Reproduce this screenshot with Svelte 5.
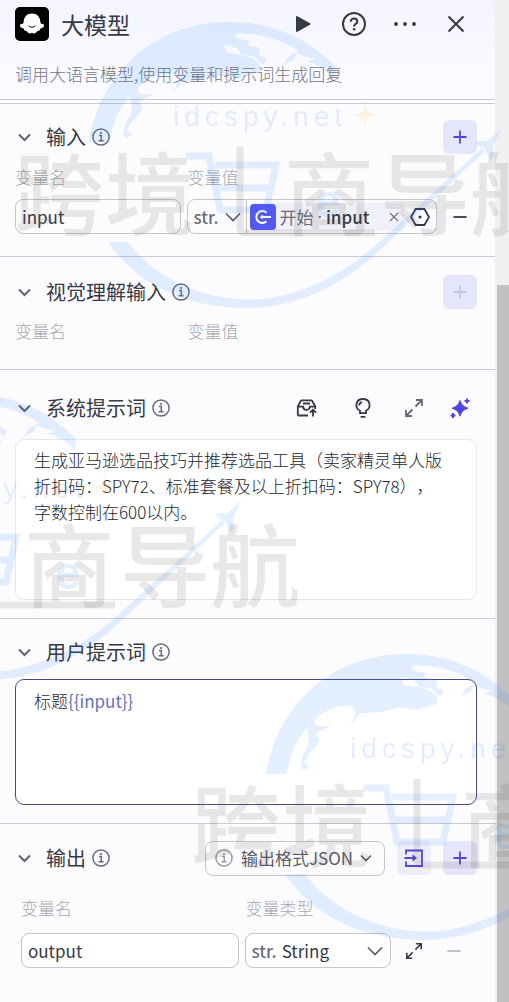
<script>
  let name = $state('input');
  let outputName = $state('output');
  let systemPrompt = $state(
    '生成亚马逊选品技巧并推荐选品工具（卖家精灵单人版\n折扣码：SPY72、标准套餐及以上折扣码：SPY78），\n字数控制在600以内。'
  );
  const variable = '{{input}}';
  const marks = [
    [0, 0],
    [-260, 372],
    [177, 632]
  ];
</script>

{#snippet info()}
  <svg class="info" viewBox="0 0 18 18" width="18" height="18" aria-hidden="true">
    <circle cx="9" cy="9" r="8.1" />
    <path d="M7 7.6h2.3v5M6.6 12.8h5" />
    <circle class="dot" cx="9" cy="5" r="1.1" />
  </svg>
{/snippet}

{#snippet plus()}
  <svg viewBox="0 0 34 34" width="34" height="34" aria-hidden="true"><path d="M17 10.5v13M10.5 17h13" /></svg>
{/snippet}

{#snippet minus()}
  <svg viewBox="0 0 34 34" width="34" height="34" aria-hidden="true"><path d="M10.5 17h13" /></svg>
{/snippet}

{#snippet title(text)}
  <h2>
    <button class="toggle" type="button">
      <svg viewBox="0 0 18 18" width="18" height="18" aria-hidden="true"><path d="M4 6.5l5.5 5.5L15 6.5" /></svg>
      <span>{text}</span>
    </button>
    {@render info()}
  </h2>
{/snippet}

<div class="page">
  <main>
    <header>
      <div class="bar">
        <svg class="logo" viewBox="0 0 34 34" width="34" height="34" aria-hidden="true">
          <rect width="34" height="34" rx="5" />
          <path class="ghost" d="M17 6.500c5 0 8 3.400 8.400 8.600.2 1.700.900 1.900 2.100 1.800 1.800 0 2 2.100.7 3.400-.8.8-1.800 1.200-2.900 1.300-.2 1.900-1.400 2.700-3 2.400-1.100 2.500-3.400 2.900-5.300 1.800-1.900 1.100-4.200.7-5.300-1.800-1.600.3-2.800-.5-3-2.400-1.100-.1-2.100-.5-2.900-1.300-1.300-1.300-1.100-3.400.7-3.400 1.200.1 1.900-.1 2.100-1.800.4-5.200 3.400-8.600 8.400-8.600z" />
          <path class="smile" d="M13.500 18.500c1.500 2.300 5.500 2.300 7 0" />
        </svg>
        <h1>大模型</h1>
        <div class="actions">
          <button type="button" aria-label="运行"><svg viewBox="0 0 34 34" width="34" height="34"><path class="fill" d="M10 10c0-.9.7-1.200 1.400-.8l12.600 7c.8.5.8 1.100 0 1.600l-12.600 7c-.7.4-1.400.1-1.400-.8z" /></svg></button>
          <button type="button" aria-label="帮助"><svg viewBox="0 0 34 34" width="34" height="34"><circle cx="17" cy="17" r="11" /><path d="M13.800 14.700c0-4.300 6.500-4 6.500-.2 0 2.500-3.200 2.300-3.200 5" /><circle class="fill" cx="17.100" cy="22.300" r="1.300" /></svg></button>
          <button type="button" aria-label="更多"><svg viewBox="0 0 34 34" width="34" height="34"><circle class="fill" cx="8" cy="17" r="1.900" /><circle class="fill" cx="17" cy="17" r="1.900" /><circle class="fill" cx="26" cy="17" r="1.900" /></svg></button>
          <button type="button" aria-label="关闭"><svg viewBox="0 0 34 34" width="34" height="34"><path d="M9.500 9.500l15 15M24.500 9.500l-15 15" /></svg></button>
        </div>
      </div>
      <p>调用大语言模型,使用变量和提示词生成回复</p>
    </header>

    <section class="inputs">
      <div class="head">
        {@render title('输入')}
        <button class="square" type="button" aria-label="添加输入">{@render plus()}</button>
      </div>
      <div class="row pair labels"><label for="var-name">变量名</label><label for="var-type">变量值</label></div>
      <div class="row pair">
        <input id="var-name" class="field" bind:value={name} />
        <div class="field combo">
          <span class="picker">
            <select id="var-type"><option>str.</option></select>
            <svg class="down" viewBox="0 0 16 16" width="16" height="16" aria-hidden="true"><path d="M1 4.500l7 7 7-7" /></svg>
          </span>
          <span class="chip">
            <svg class="start" viewBox="0 0 26 26" width="26" height="26" aria-hidden="true"><rect width="26" height="26" rx="4" /><path d="M16.500 8.700a6 6 0 1 0 0 8.600M11.500 13h9.500" /><circle cx="12" cy="13" r="1.700" /></svg>
            <span class="source">开始</span><span class="sep">·</span><b>input</b>
            <button class="clear" type="button" aria-label="清除"><svg viewBox="0 0 12 12" width="12" height="12"><path d="M2 2l8 8M10 2l-8 8" /></svg></button>
          </span>
          <button class="hex" type="button" aria-label="选择变量"><svg viewBox="0 0 20 20" width="20" height="20"><path d="M5.600 2h8.800L19 10l-4.600 8H5.600L1 10z" /><circle class="fill" cx="10" cy="10" r="1.600" /></svg></button>
        </div>
        <button class="plain" type="button" aria-label="删除">{@render minus()}</button>
      </div>
    </section>

    <section class="vision">
      <div class="head">
        {@render title('视觉理解输入')}
        <button class="square" type="button" aria-label="添加视觉输入" disabled>{@render plus()}</button>
      </div>
      <div class="row pair labels"><span>变量名</span><span>变量值</span></div>
    </section>

    <section class="system">
      <div class="head">
        {@render title('系统提示词')}
        <button class="plain wide" type="button" aria-label="提示词库"><svg viewBox="0 0 22 22" width="22" height="22"><path d="M12 18.500H2.800a1 1 0 0 1-1-1V9.500L5 3.800a1 1 0 0 1 .9-.5h9.200a1 1 0 0 1 .9.5l3.300 5.700v2.500M2 9.700h5.200c0 4.200 6.600 4.200 6.600 0h5.300M7 6.500h7M17 19.500v-6.300M14 15.700l3-3 3 3" /></svg></button>
        <button class="plain wide" type="button" aria-label="示例"><svg viewBox="0 0 22 22" width="22" height="22"><path d="M8 16.200v-2.400C2.300 10.800 3.500 2 11 2s8.700 8.800 3 11.800v2.400zM8.600 19.800h4.800M7.200 8.500c.1-1.900 1.200-3.100 2.900-3.400" /></svg></button>
        <button class="plain grey" type="button" aria-label="展开系统提示词"><svg viewBox="0 0 20 20" width="20" height="20"><path d="M11.500 8.500l6-6M12 2h6v6M8.500 11.500l-6 6M2 12v6h6" /></svg></button>
        <button class="plain spark" type="button" aria-label="优化"><svg viewBox="0 0 22 22" width="22" height="22"><path d="M11 3.500c1.800 4.600 2.900 5.700 8 7.700-5.100 2-6.200 3.100-8 8-1.800-4.900-2.900-6-8-8 5.100-2 6.200-3.100 8-7.700z" /><path class="thin" d="M18 1.500v5M15.500 4h5M4 16v5M1.500 18.500h5" /></svg></button>
      </div>
      <textarea aria-label="系统提示词" bind:value={systemPrompt}></textarea>
    </section>

    <section class="user">
      <div class="head">{@render title('用户提示词')}</div>
      <div class="editor" role="textbox" tabindex="0" aria-multiline="true" aria-label="用户提示词" contenteditable="true">标题<span>{variable}</span></div>
    </section>

    <section class="output">
      <div class="head">
        {@render title('输出')}
        <div class="field format">
          {@render info()}
          <label for="format">输出格式</label>
          <select id="format"><option>JSON</option></select>
          <svg class="down" viewBox="0 0 12 12" width="12" height="12" aria-hidden="true"><path d="M1 3.500l5 5 5-5" /></svg>
        </div>
        <button class="square pale" type="button" aria-label="导入"><svg viewBox="0 0 34 34" width="34" height="34"><path d="M9 13.500v-4h16v15.500H9v-4.500M7.500 17h10" /><path class="fill" d="M15.500 13.200l4.500 3.800-4.500 3.800z" /></svg></button>
        <button class="square" type="button" aria-label="添加输出">{@render plus()}</button>
      </div>
      <div class="row out labels"><label for="out-name">变量名</label><label for="out-type">变量类型</label></div>
      <div class="row out">
        <input id="out-name" class="field" bind:value={outputName} />
        <div class="field type">
          <span>str.</span>
          <select id="out-type"><option>String</option></select>
          <svg class="down" viewBox="0 0 16 16" width="16" height="16" aria-hidden="true"><path d="M1 4.500l7 7 7-7" /></svg>
        </div>
        <button class="plain" type="button" aria-label="展开"><svg viewBox="0 0 20 20" width="18" height="18"><path d="M11.500 8.500l6-6M12 2h6v6M8.500 11.500l-6 6M2 12v6h6" /></svg></button>
        <button class="plain" type="button" aria-label="删除输出" disabled>{@render minus()}</button>
      </div>
    </section>
  </main>
  <div class="scroll"><div class="thumb"></div></div>

  <svg class="marks" aria-hidden="true">
    {#each marks as [x, y]}
      <g transform="translate({x} {y})">
        <g class="blue" transform="translate(77 -12) scale(0.3333)">
          <path d="M35 462C75 235 250 100 460 102 590 104 690 150 775 235V270C755 250 735 240 715 228L690 222 715 212 680 205 660 195 650 215 620 230 635 205 665 190C610 150 540 132 470 137L480 152 520 160 510 170 550 180 545 200 570 210 560 230 530 205 495 200 480 180 440 170 450 195 490 200 525 210 545 225 553 250 515 262 485 270 440 262 385 275 320 280 290 312 305 275 290 258C250 252 200 275 180 305L190 318 230 318 185 340 196 360 190 375 165 400 150 425 166 440 150 450 138 440 145 410 165 370 160 325C125 360 110 400 98 462z" />
        </g>
        <path class="blue" d="M108 242h20C160 285 215 303 265 299 315 291 350 268 378 243L482 148 485 151 380 250C340 288 292 309 242 308 180 306 135 282 108 242z" />
        <path class="blue" d="M501 129l-8 17 1 11-4 3-5-11-10-5 3-3 9 0z" />
        <text class="site" x="173" y="126">idcspy.net</text>
        <path class="star" d="M365 102c1 9 3 12 13 13-10 1-12 4-13 13-1-9-3-12-13-13 10-1 12-4 13-13z" />
        <text class="brand" y="228" x="14 105 284 380 470">跨境商导航</text>
        <path class="cart" d="M186 156h23l11 54h46l10-45h-61M217 188h53" />
        <path class="pole" d="M240 147v80q0 6 7 6h128" />
        <text class="shop" x="315" y="217">e</text>
      </g>
    {/each}
  </svg>
</div>

<style>
  :global(body) { margin: 0; background: #fcfcff; }
  .page, .page * { box-sizing: border-box; }
  .page {
    position: relative;
    display: grid;
    grid-template-columns: minmax(0, 1fr) 14px;
    min-height: 100vh;
    color: #363946;
    font: 17px/26px "Noto Sans CJK SC", sans-serif;
    text-spacing-trim: space-all;
  }
  main { background: linear-gradient(#f4f4fe, #fcfcff 100px); }
  h1, h2, p { margin: 0; font-weight: 400; }
  h1 { font-size: 23px; line-height: 34px; }
  h2 { display: flex; align-items: center; gap: 6px; margin-right: auto; }
  button { display: grid; place-items: center; padding: 0; border: 0; background: none; color: inherit; font: inherit; }
  svg { display: block; flex: none; fill: none; stroke: currentColor; stroke-width: 2; }
  svg .fill { fill: currentColor; stroke: none; }
  header { padding: 7px 22px 12px 15px; border-bottom: 1px solid #c9cad6; }
  .bar { display: flex; align-items: center; gap: 12px; }
  .logo rect { fill: #000; stroke: none; }
  .ghost { fill: #fff; stroke: none; }
  .smile { stroke: #000; stroke-width: 1; }
  .actions { display: flex; gap: 17px; margin-left: auto; }
  header p { margin-top: 20px; color: #737786; font-weight: 300; }
  section { padding: 0 18px 0 15px; border-bottom: 1px solid #c9cad6; }
  .head { display: flex; align-items: center; gap: 12px; height: 34px; }
  .toggle { display: flex; align-items: center; gap: 13px; font-size: 20px; line-height: 34px; }
  .toggle svg { color: #5d6172; }
  .info { color: #676b7a; stroke-width: 1.500; }
  .info .dot { fill: currentColor; stroke: none; }
  .square { width: 34px; height: 34px; border-radius: 6px; background: #e5e5fc; color: #5147d0; }
  .square svg, .plain svg { stroke-width: 1.800; }
  .square:disabled { color: #c5c4ec; }
  .square.pale { background: #eeeefb; }
  .plain { height: 34px; width: 34px; }
  .plain:disabled { color: #b9bbc4; }
  .plain.wide { width: 44px; }
  .grey { color: #666977; }
  .spark { color: #5147e8; }
  .spark path { fill: currentColor; stroke-width: 1; }
  .spark .thin { stroke-width: 2; }

  .row { display: grid; gap: 6px; align-items: center; }
  .pair { grid-template-columns: 2fr 3fr 34px; }
  .out { grid-template-columns: 3fr 2fr 34px 34px; }
  .labels { color: #a8a9ae; font-weight: 300; }
  .field {
    min-width: 0;
    width: 100%;
    height: 35px;
    border: 1px solid #c3c4ce;
    border-radius: 8px;
    background: transparent;
    color: inherit;
    font: inherit;
  }
  input.field { padding: 0 6px; }
  select { min-width: 0; padding: 0; border: 0; background: none; color: inherit; font: inherit; appearance: none; }
  .down { color: #555968; stroke-width: 1.600; pointer-events: none; }

  .inputs { border-top: 1px solid #c9cad6; margin-top: 3px; padding-top: 16px; padding-bottom: 22px; }
  .inputs .labels { margin: 10px 0 9px; }
  .combo { display: flex; align-items: center; overflow: hidden; }
  .picker { display: flex; align-items: center; gap: 6px; padding: 0 5px; height: 100%; border-right: 1px solid #c3c4ce; color: #686c7a; }
  .picker select { font-weight: 500; }
  .chip { display: flex; align-items: center; flex: 1; min-width: 0; height: 28px; margin-left: 3px; border-radius: 4px; background: #f0f0f8; white-space: nowrap; }
  .start { margin-right: 3px; color: #fff; }
  .start rect { fill: #5656f2; stroke: none; }
  .start circle { fill: #fff; stroke: none; }
  .source, .sep { color: #686c7a; }
  .sep { margin: 0 4px; font-family: "Noto Sans", sans-serif; }
  .chip b { font-weight: 500; }
  .clear { margin: 0 4px 0 auto; color: #74788a; }
  .clear svg { stroke-width: 1.300; }
  .hex { margin: 0 6px; }
  .hex svg { stroke-width: 1.800; }

  .vision { padding-top: 18px; padding-bottom: 25px; }
  .vision .labels { margin-top: 9px; }
  .system { padding-top: 21px; padding-bottom: 18px; }
  textarea, .editor { display: block; width: 100%; border-radius: 9px; background: #fff; color: #25272f; font: inherit; outline: 0; }
  textarea { height: 161px; margin-top: 14px; padding: 7px 12px 7px 18px; border: 1px solid #e5e5ec; resize: none; overflow: hidden; font-weight: 300; }
  .user { padding-top: 16px; padding-bottom: 18px; }
  .editor { min-height: 126px; margin-top: 10px; padding: 8px 18px; border: 1px solid #484b86; font-weight: 300; }
  .editor span { color: #6672b8; font-weight: 400; }

  .output { padding: 17px 18px 0 15px; border: 0; }
  .format { display: flex; align-items: center; width: 180px; padding: 0 12px 0 9px; color: #5a5d6a; }
  .format label { margin-left: 8px; }
  .format .info { color: #9a9ca8; }
  .format .down { margin-left: auto; }
  .output .row { padding: 0 6px; }
  .output .labels { margin: 20px 0 12px; }
  .output .field { background: #fff; }
  .output .format { background: transparent; }
  .type { display: flex; align-items: center; gap: 5px; padding: 0 7px 0 5px; }
  .type span { color: #686c7a; font-weight: 500; }
  .type select { flex: 1; }

  .scroll { display: flex; flex-direction: column; padding: 285px 0 0 2px; background: #f0f0f0; }
  .thumb { flex: 1; background: #c1c1c1; }

  /* Brand watermark floats above the whole panel */
  .marks { position: absolute; inset: 0; width: 100%; height: 100%; overflow: hidden; pointer-events: none; stroke: none; }
  .blue { fill: rgb(30 130 255 / 12%); }
  .site { fill: rgb(30 110 240 / 13%); font: 28px "Liberation Sans", sans-serif; letter-spacing: 5px; }
  .star { fill: rgb(255 190 60 / 16%); }
  .brand { fill: rgb(90 75 65 / 13%); font: 500 90px "Noto Sans CJK SC", sans-serif; }
  .cart { stroke: rgb(30 130 255 / 12%); stroke-width: 7; }
  .pole { stroke: rgb(90 75 65 / 13%); stroke-width: 7; }
  .shop { fill: rgb(30 130 255 / 12%); font: 700 46px "Liberation Sans", sans-serif; }
</style>
